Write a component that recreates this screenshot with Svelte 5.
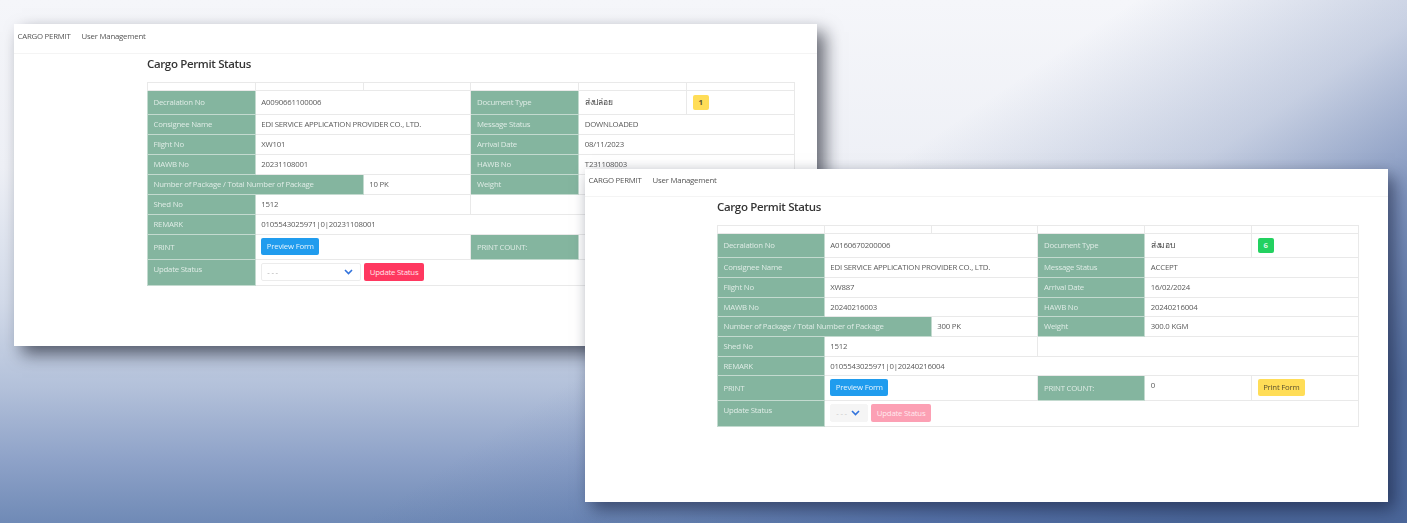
<script lang="ts">
  // two permit screens laid over a blue desktop wallpaper
  const first = {
    cls: 'win-a',
    declaration: 'A0090661100006',
    docType: 'ส่งปล่อย',
    tag: '1',
    tagCls: 'tag-yellow',
    message: 'DOWNLOADED',
    flight: 'XW101',
    arrival: '08/11/2023',
    mawb: '20231108001',
    hawb: 'T231108003',
    pkg: '10 PK',
    weight: '10.0 KGM',
    remark: '0105543025971|0|20231108001',
    disabled: false
  };
  const second = {
    cls: 'win-b',
    declaration: 'A0160670200006',
    docType: 'ส่งมอบ',
    tag: '6',
    tagCls: 'tag-green',
    message: 'ACCEPT',
    flight: 'XW887',
    arrival: '16/02/2024',
    mawb: '20240216003',
    hawb: '20240216004',
    pkg: '300 PK',
    weight: '300.0 KGM',
    remark: '0105543025971|0|20240216004',
    disabled: true
  };
</script>

{#snippet permitWindow(p)}
  <section class="window {p.cls}">
    <nav class="navbar">
      <span>CARGO PERMIT</span>
      <span>User Management</span>
    </nav>
    <div class="content">
      <h1>Cargo Permit Status</h1>
      <table>
        <tbody>
          <tr class="blank"><td></td><td></td><td></td><td></td><td></td><td></td></tr>
          <tr class="first">
            <th>Decralation No</th>
            <td colspan="2">{p.declaration}</td>
            <th>Document Type</th>
            <td class="thai">{p.docType}</td>
            <td><span class="tag {p.tagCls}">{p.tag}</span></td>
          </tr>
          <tr>
            <th>Consignee Name</th>
            <td colspan="2">EDI SERVICE APPLICATION PROVIDER CO., LTD.</td>
            <th>Message Status</th>
            <td colspan="2">{p.message}</td>
          </tr>
          <tr>
            <th>Flight No</th>
            <td colspan="2">{p.flight}</td>
            <th>Arrival Date</th>
            <td colspan="2">{p.arrival}</td>
          </tr>
          <tr class="tight">
            <th>MAWB No</th>
            <td colspan="2">{p.mawb}</td>
            <th>HAWB No</th>
            <td colspan="2">{p.hawb}</td>
          </tr>
          <tr>
            <th colspan="2">Number of Package / Total Number of Package</th>
            <td>{p.pkg}</td>
            <th>Weight</th>
            <td colspan="2">{p.weight}</td>
          </tr>
          <tr>
            <th>Shed No</th>
            <td colspan="2">1512</td>
            <td colspan="3"></td>
          </tr>
          <tr class="tight">
            <th>REMARK</th>
            <td colspan="5">{p.remark}</td>
          </tr>
          <tr class="print">
            <th>PRINT</th>
            <td colspan="2"><button class="btn btn-info">Preview Form</button></td>
            <th>PRINT COUNT:</th>
            <td class="top">0</td>
            <td><button class="btn btn-warn">Print Form</button></td>
          </tr>
          <tr class="update">
            <th class="top">Update Status</th>
            <td colspan="5">
              <div class="controls">
                <div class="select" class:off={p.disabled}>
                  <span>- - -</span>
                  <svg width="9" height="6" viewBox="0 0 9 6"><path d="M1 1l3.500 3.500L8 1" fill="none" stroke="#3273dc" stroke-width="1.600" /></svg>
                </div>
                <button class="btn btn-danger" class:off={p.disabled}>Update Status</button>
              </div>
            </td>
          </tr>
        </tbody>
      </table>
    </div>
  </section>
{/snippet}

<main class="desktop">
  {@render permitWindow(first)}
  {@render permitWindow(second)}
</main>

<style>
  :global(body) {
    margin: 0;
  }

  .desktop {
    position: relative;
    width: 1407px;
    height: 523px;
    overflow: hidden;
    font-family: "Open Sans", "Noto Sans", sans-serif;
    background:
      linear-gradient(146deg, rgba(70, 100, 160, 0) 52%, rgba(70, 100, 160, 0.25) 66%, rgba(70, 100, 160, 0.65) 78%, rgba(70, 98, 150, 0.88) 90%),
      linear-gradient(180deg, #f5f6fa 0%, #eef0f6 32%, #d2dae9 58%, #b3c1da 74%, #8ea2c8 88%, #6f8ab6 100%);
  }

  .window {
    position: absolute;
    width: 803px;
    background: #fff;
    color: #5a5a5a;
    font-size: 7.800px;
    letter-spacing: -0.220px;
  }

  .win-a {
    left: 14px;
    top: 24px;
    height: 322px;
    box-shadow: 8px 8px 16px rgba(10, 14, 26, 0.6);
  }

  .win-b {
    left: 585px;
    top: 169px;
    height: 333px;
    box-shadow: 7px 8px 16px rgba(20, 30, 60, 0.55), 0 0 14px rgba(0, 0, 0, 0.08);
  }

  .navbar,
  .content {
    filter: blur(0.3px);
  }

  .navbar {
    display: flex;
    gap: 11px;
    align-items: center;
    box-sizing: border-box;
    height: 30px;
    padding: 0 0 5px 3.500px;
    border-bottom: 1px solid #f4f4f4;
    color: #555;
  }

  .win-b .navbar {
    height: 28px;
  }

  .content {
    padding-left: 133px;
  }

  .win-b .content {
    padding-left: 132px;
  }

  h1 {
    margin: 0;
    padding: 2px 0 10px;
    font-size: 11.500px;
    font-weight: 600;
    line-height: 16px;
    letter-spacing: -0.350px;
    color: #363636;
  }

  table {
    table-layout: fixed;
    border-collapse: collapse;
    width: 648px;
  }

  .win-b table {
    width: 642px;
  }

  th,
  td {
    height: 20px;
    padding: 0 5.500px 1px;
    border: 1px solid #e9e9e9;
    box-sizing: border-box;
    font-weight: 400;
    text-align: left;
    white-space: nowrap;
    overflow: hidden;
  }

  th {
    background: #84b59f;
    border-color: #c3dacf;
    color: #dfece6;
  }

  .blank td {
    height: 8px;
    padding: 0;
  }

  .first th,
  .first td {
    height: 24px;
  }

  .win-b .tight th,
  .win-b .tight td {
    height: 19px;
  }

  .print th,
  .print td {
    height: 25px;
  }

  .update th,
  .update td {
    height: 26px;
  }

  .top,
  th.top {
    vertical-align: top;
    padding-top: 4px;
  }

  .update td {
    padding-top: 0;
  }

  .thai {
    color: #444;
    font-size: 8.500px;
  }

  .tag {
    display: inline-block;
    width: 16px;
    height: 15px;
    line-height: 15px;
    border-radius: 2px;
    text-align: center;
    font-weight: 700;
  }

  .tag-yellow {
    background: #ffdd57;
    color: #5c5230;
  }

  .tag-green {
    background: #23d160;
    color: #d8f7e3;
  }

  .btn {
    display: block;
    height: 17.500px;
    padding: 0 5.500px;
    border: 0;
    border-radius: 2px;
    font: inherit;
    letter-spacing: inherit;
    line-height: 17px;
  }

  .btn-info {
    background: #209cee;
    color: #e6f4fd;
  }

  .btn-warn {
    background: #ffdd57;
    color: #5c5230;
  }

  .btn-danger {
    background: #ff3860;
    color: #ffe3e9;
  }

  .btn-danger.off {
    background: #fca0b4;
    color: #ffe9ee;
  }

  .controls {
    display: flex;
    gap: 3px;
    align-items: center;
  }

  .select {
    display: flex;
    align-items: center;
    justify-content: space-between;
    box-sizing: border-box;
    width: 100px;
    height: 18px;
    padding: 0 7px 0 5px;
    border: 1px solid #ececec;
    border-radius: 2px;
    color: #aaa;
  }

  .select.off {
    width: 38px;
    background: #f5f5f5;
    border-color: #f5f5f5;
    color: #c8c8c8;
  }
</style>
